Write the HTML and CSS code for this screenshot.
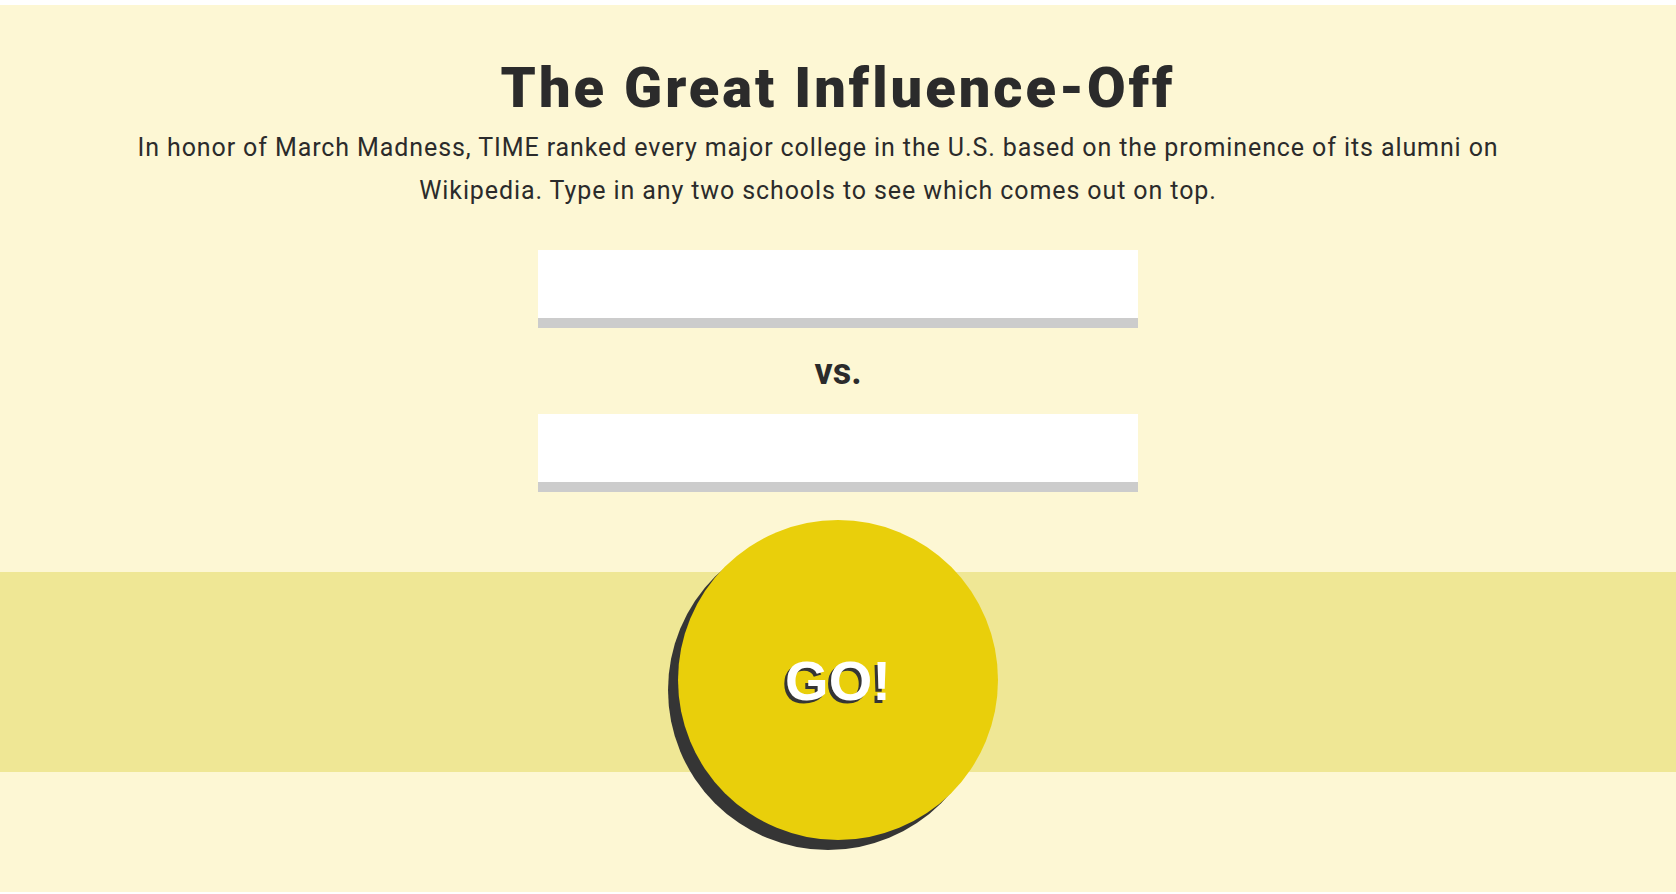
FILE: index.html
```html
<!DOCTYPE html>
<html lang="en">
<head>
  <meta charset="UTF-8">
  <meta name="viewport" content="width=device-width, initial-scale=1.0">
  <title>The Great Influence-Off</title>
  <link rel="stylesheet" href="styles.css">
</head>
<body>
  <div class="app">
    <h1 class="title">The Great Influence-Off</h1>
    <p class="intro">In honor of March Madness, TIME ranked every major college in the U.S. based on the prominence of its alumni on Wikipedia. Type in any two schools to see which comes out on top.</p>

    <form class="matchup" onsubmit="return false;">
      <input type="text" class="school" id="schoolA" autocomplete="off">
      <div class="vs">vs.</div>
      <input type="text" class="school" id="schoolB" autocomplete="off">

      <div class="go-area">
        <button type="submit" class="go-btn">GO!</button>
      </div>
    </form>
  </div>
</body>
</html>
```

FILE: styles.css
```css
body {
  margin: 0;
  padding: 0;
  background-color: #fff;
}
.app {
  margin-top: 5px;
  height: 887px;
  padding-top: 55px;
  box-sizing: border-box;
  background-color: #fdf7d4;
  color: #2b2b2b;
  font-family: Roboto, "Liberation Sans", sans-serif;
  overflow: hidden;
}
.title {
  margin: 0;
  font-size: 56px;
  font-weight: 900;
  line-height: 56px;
  text-align: center;
  letter-spacing: 3px;
}
.intro {
  max-width: 1460px;
  box-sizing: border-box;
  margin: 10px auto 0;
  padding-right: 40px;
  font-size: 25px;
  line-height: 43px;
  text-align: center;
  letter-spacing: 0.9px;
}
.matchup {
  margin-top: 38px;
}
.school {
  display: block;
  width: 600px;
  height: 78px;
  margin: 0 auto;
  padding: 0 20px;
  box-sizing: border-box;
  border: none;
  border-bottom: 10px solid #ccc;
  border-radius: 0;
  background-color: #fff;
  font-family: Roboto, "Liberation Sans", sans-serif;
  font-size: 28px;
  color: #2b2b2b;
  outline: none;
}
.vs {
  margin: 26px 0 24px;
  font-size: 36px;
  font-weight: 700;
  line-height: 36px;
  text-align: center;
}
.go-area {
  margin-top: 28px;
  display: flex;
  justify-content: center;
  background: linear-gradient(to bottom,
    transparent 52px, #efe795 52px,
    #efe795 252px, transparent 252px);
}
.go-btn {
  width: 320px;
  height: 320px;
  padding: 0;
  border: none;
  border-radius: 50%;
  background-color: #e9cf0b;
  box-shadow: -10px 10px 0 #353535;
  color: #fff;
  font-family: "Liberation Sans", Arial, sans-serif;
  font-size: 56px;
  font-weight: 700;
  text-shadow: -3px 3px 0 #353535;
  cursor: pointer;
}
```
